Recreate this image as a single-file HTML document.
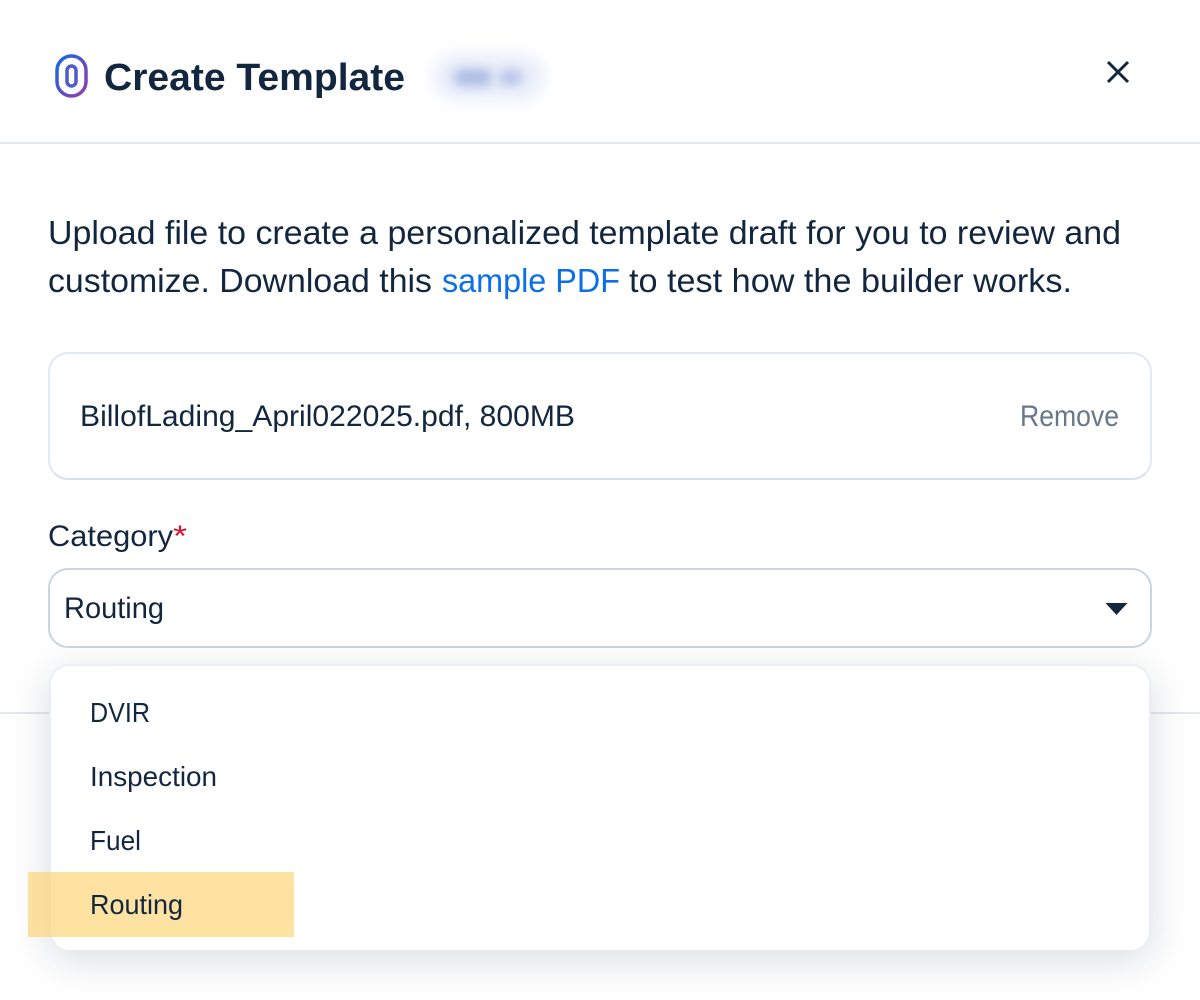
<!DOCTYPE html>
<html><head><meta charset="utf-8"><style>
html,body{margin:0;padding:0;background:#fff}
#p{position:relative;width:1200px;height:1000px;overflow:hidden;background:#fff}
.a{position:absolute;box-sizing:border-box}
svg{position:absolute;left:0;top:0}
text{font-family:"Liberation Sans",sans-serif;fill:#12263f}
</style></head><body><div id="p">
<div class="a" style="left:0;top:142px;width:1200px;height:2px;background:#e3e8ed"></div>
<div class="a" style="left:0;top:712px;width:1200px;height:2px;background:#e3e8ed"></div>
<div class="a" style="left:434px;top:54px;width:110px;height:46px;border-radius:23px;background:#e8edfa;filter:blur(8px)"></div>
<div class="a" style="left:454px;top:69px;width:38px;height:17px;border-radius:8px;background:#aebde4;filter:blur(5px)"></div>
<div class="a" style="left:499px;top:70px;width:23px;height:15px;border-radius:7px;background:#b6c4e8;filter:blur(5px)"></div>
<div class="a" style="left:48px;top:352px;width:1104px;height:128px;border:2px solid #e3e8ee;border-bottom-color:#d8dee6;border-radius:20px;background:#fff"></div>
<div class="a" style="left:48px;top:568px;width:1104px;height:80px;border:2px solid #cbd5e0;border-radius:20px;background:#fff"></div>
<div class="a" style="left:49px;top:664px;width:1102px;height:286px;border:2px solid #ebeef2;border-bottom:0;border-radius:20px;background:#fff;box-shadow:0 10px 40px rgba(20,35,60,.16)"></div>
<div class="a" style="left:28px;top:872px;width:266px;height:65px;background:rgba(253,208,105,.62)"></div>
<svg width="1200" height="1000" viewBox="0 0 1200 1000">
<defs><linearGradient id="g" x1="0" y1="0" x2="1" y2="1"><stop offset="0" stop-color="#1268e8"/><stop offset="1" stop-color="#9a3ca8"/></linearGradient></defs>
<rect x="57" y="56" width="29" height="40" rx="14.500" fill="none" stroke="url(#g)" stroke-width="3.500"/>
<rect x="67" y="66" width="9" height="20" rx="4.500" fill="none" stroke="#4d5cc8" stroke-width="3.500"/>
<text x="104" y="90" font-size="38" font-weight="700" textLength="301" lengthAdjust="spacingAndGlyphs">Create Template</text>
<path d="M1108 62L1128 82M1128 62L1108 82" stroke="#12263f" stroke-width="3" fill="none"/>
<text x="48" y="244" font-size="33.500" textLength="1073" lengthAdjust="spacingAndGlyphs">Upload file to create a personalized template draft for you to review and</text>
<text x="48" y="292" font-size="33.500" textLength="384" lengthAdjust="spacingAndGlyphs">customize. Download this</text>
<text x="442" y="292" font-size="33.500" textLength="178" lengthAdjust="spacingAndGlyphs" style="fill:#0a6fe8">sample PDF</text>
<text x="629" y="292" font-size="33.500" textLength="443" lengthAdjust="spacingAndGlyphs">to test how the builder works.</text>
<text x="80" y="426" font-size="29.500" textLength="495" lengthAdjust="spacingAndGlyphs">BillofLading_April022025.pdf, 800MB</text>
<text x="1020" y="426" font-size="29.500" textLength="99" lengthAdjust="spacingAndGlyphs" style="fill:#68778a">Remove</text>
<text x="48" y="546" font-size="29.500" textLength="125" lengthAdjust="spacingAndGlyphs">Category</text>
<text x="173" y="546" font-size="29.500" textLength="14" lengthAdjust="spacingAndGlyphs" style="fill:#d4112e">*</text>
<text x="64" y="618" font-size="29.500" textLength="100" lengthAdjust="spacingAndGlyphs">Routing</text>
<path d="M1105.500 603H1127.500L1116.500 615Z" fill="#12263f"/>
<text x="90" y="722" font-size="27.500" textLength="60" lengthAdjust="spacingAndGlyphs">DVIR</text>
<text x="90" y="786" font-size="27.500" textLength="127" lengthAdjust="spacingAndGlyphs">Inspection</text>
<text x="90" y="850" font-size="27.500" textLength="51" lengthAdjust="spacingAndGlyphs">Fuel</text>
<text x="90" y="914" font-size="27.500" textLength="93" lengthAdjust="spacingAndGlyphs">Routing</text>
</svg>
</div></body></html>
